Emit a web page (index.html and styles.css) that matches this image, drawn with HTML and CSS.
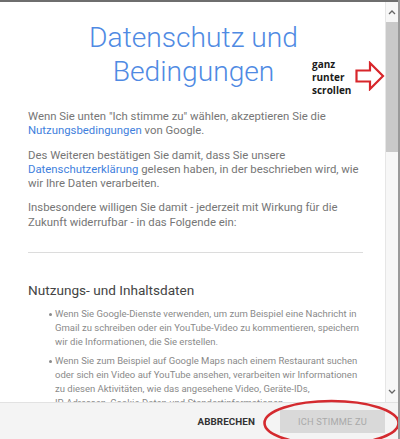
FILE: index.html
```html
<!DOCTYPE html>
<html lang="de">
<head>
<meta charset="utf-8">
<link rel="stylesheet" href="styles.css">
</head>
<body>
<div class="frame">
  <div class="topbar"></div>
  <div class="main">
    <div class="scroller">
      <h1 class="title">Datenschutz und<br>Bedingungen</h1>
      <p class="para">Wenn Sie unten "Ich stimme zu" wählen, akzeptieren Sie die <a class="link">Nutzungsbedingungen</a> von Google.</p>
      <p class="para">Des Weiteren bestätigen Sie damit, dass Sie unsere <a class="link">Datenschutzerklärung</a> gelesen haben, in der beschrieben wird, wie wir Ihre Daten verarbeiten.</p>
      <p class="para">Insbesondere willigen Sie damit - jederzeit mit Wirkung für die Zukunft widerrufbar - in das Folgende ein:</p>
      <hr class="sep">
      <h2 class="heading">Nutzungs- und Inhaltsdaten</h2>
      <ul class="bullets">
        <li>Wenn Sie Google-Dienste verwenden, um zum Beispiel eine Nachricht in Gmail zu schreiben oder ein YouTube-Video zu kommentieren, speichern wir die Informationen, die Sie erstellen.</li>
        <li>Wenn Sie zum Beispiel auf Google Maps nach einem Restaurant suchen oder sich ein Video auf YouTube ansehen, verarbeiten wir Informationen zu diesen Aktivitäten, wie das angesehene Video, Geräte-IDs, <span class="nowrap">IP-Adressen,</span> Cookie-Daten und Standortinformationen.</li>
      </ul>
      <div class="note">ganz<br>runter<br>scrollen</div>
      <svg class="arrow" width="30" height="30" viewBox="0 0 30 30">
        <path d="M1.5 9.5 H15 V2 L28 15 L15 28 V20.5 H1.5 Z" fill="none" stroke="#d8262b" stroke-width="2.2" stroke-linejoin="miter"/>
      </svg>
    </div>
    <div class="scrollbar">
      <div class="sb-arrow">
        <svg width="8" height="6" viewBox="0 0 8 6"><path d="M1 5 L4 2 L7 5" fill="none" stroke="#666" stroke-width="1.3"/></svg>
      </div>
      <div class="sb-thumb"></div>
      <div class="sb-track"></div>
      <div class="sb-arrow">
        <svg width="8" height="6" viewBox="0 0 8 6"><path d="M1 1 L4 4 L7 1" fill="none" stroke="#666" stroke-width="1.3"/></svg>
      </div>
    </div>
  </div>
  <div class="footer">
    <button class="btn cancel">ABBRECHEN</button>
    <button class="btn agree">ICH STIMME ZU</button>
    <svg class="ellipse" width="140" height="50" viewBox="0 0 140 50">
      <ellipse cx="69.5" cy="24" rx="67" ry="22" fill="none" stroke="#d42a2f" stroke-width="2.6"/>
    </svg>
  </div>
</div>
</body>
</html>
```

FILE: styles.css
```css
* { box-sizing: border-box; }
html, body { margin: 0; padding: 0; background: #fff; }
body { font-family: Roboto, "Liberation Sans", Arial, sans-serif; }

.frame {
  width: 400px;
  height: 439px;
  display: flex;
  flex-direction: column;
  border-right: 2px solid #9a9a9a;
  overflow: hidden;
  position: relative;
}

.topbar {
  height: 2px;
  background: #6e6e6e;
  flex: none;
}

.main {
  display: flex;
  height: 400px;
  flex: none;
}

.scroller {
  width: 385px;
  flex: none;
  overflow: hidden;
  padding: 19px 22px 0 28px;
  position: relative;
}

.title {
  margin: 0 0 20px;
  font-weight: 300;
  font-size: 28.2px;
  line-height: 34px;
  color: #4f8ae3;
  text-align: center;
  transform: translateX(-2px);
}

.para {
  margin: 0 0 10px;
  font-size: 11.35px;
  line-height: 14.3px;
  color: #767676;
}

.link {
  color: #3f7fdd;
  text-decoration: none;
}

.sep {
  margin: 23px 0 0;
  border: 0;
  border-top: 1px solid #dcdcdc;
  height: 0;
}

.heading {
  margin: 28px 0 8px;
  font-weight: 400;
  font-size: 13.6px;
  line-height: 18px;
  color: #444;
}

.bullets {
  margin: 0;
  padding: 0 0 0 27px;
  list-style: none;
}

.bullets li {
  position: relative;
  font-size: 9.5px;
  line-height: 14px;
  color: #8a8a8a;
  margin-bottom: 5px;
}

.bullets li::before {
  content: "";
  position: absolute;
  left: -6px;
  top: 6px;
  width: 3px;
  height: 3px;
  border-radius: 50%;
  background: #8a8a8a;
}

.nowrap { white-space: nowrap; }

.note {
  position: absolute;
  left: 312px;
  top: 56px;
  font-family: "Open Sans", "DejaVu Sans", sans-serif;
  font-weight: 700;
  font-size: 10px;
  line-height: 13px;
  color: #1a1a1a;
}

.arrow {
  position: absolute;
  left: 355px;
  top: 59px;
}

.scrollbar {
  width: 13px;
  flex: none;
  display: flex;
  flex-direction: column;
  background: #f7f7f7;
  border-left: 1px solid #e6e6e6;
}

.sb-arrow {
  height: 20px;
  flex: none;
  display: flex;
  align-items: center;
  justify-content: center;
  background: #f7f7f7;
}

.sb-thumb {
  height: 130px;
  flex: none;
  background: #c9c9c9;
}

.sb-track {
  flex: 1;
}

.footer {
  flex: 1;
  background: #f4f4f4;
  border-top: 1px solid #e2e2e2;
  display: flex;
  align-items: center;
  justify-content: flex-end;
  padding: 0 13px 0 0;
  gap: 25px;
  position: relative;
}

.btn {
  border: 0;
  font-family: Roboto, "Liberation Sans", Arial, sans-serif;
  padding: 0;
  cursor: pointer;
}

.cancel {
  background: transparent;
  font-weight: 700;
  font-size: 9.8px;
  color: #333;
  letter-spacing: 0.1px;
}

.agree {
  width: 105px;
  height: 23px;
  background: #d9d9d9;
  color: #a9a9a9;
  font-weight: 400;
  font-size: 9.3px;
  letter-spacing: 0.2px;
}

.ellipse {
  position: absolute;
  left: 262px;
  top: -4px;
}
```
